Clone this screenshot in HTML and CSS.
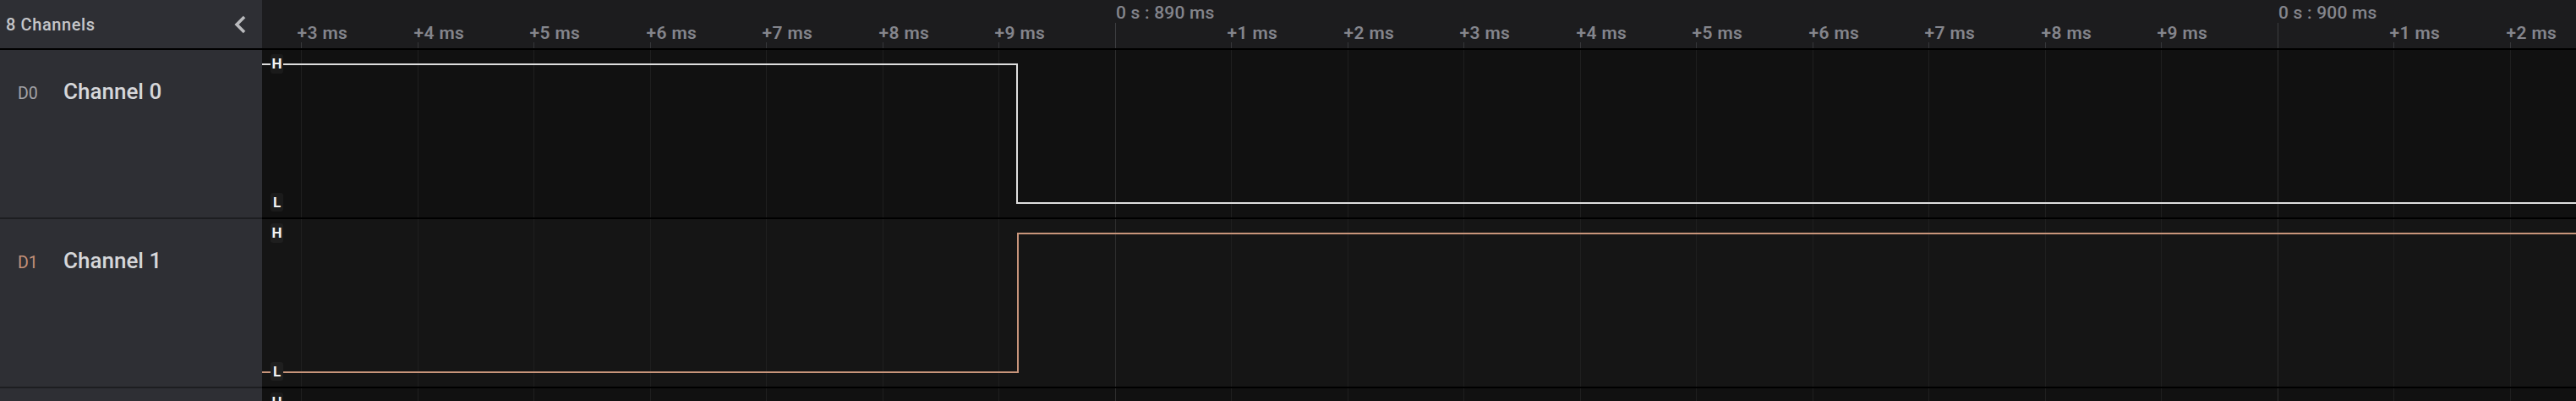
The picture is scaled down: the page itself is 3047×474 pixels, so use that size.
FILE: index.html
```html
<!DOCTYPE html>
<html lang="en">
<head>
<meta charset="utf-8">
<title>Logic Analyzer</title>
<link rel="stylesheet" href="styles.css">
</head>
<body>
<div class="app">
  <div class="side-head">
    <span class="title">8 Channels</span>
    <svg class="chev" width="16" height="24" viewBox="0 0 16 24"><polyline points="13,3 4,12 13,21" fill="none" stroke="#b9babd" stroke-width="3.6" stroke-linecap="butt" stroke-linejoin="miter"/></svg>
  </div>
  <div class="ruler">
    <svg class="ruler-ticks" width="2737" height="57">
      <g stroke="#36373a" stroke-width="1">
        <line x1="46.5" y1="50" x2="46.5" y2="57"/><line x1="184.5" y1="50" x2="184.5" y2="57"/>
        <line x1="321.5" y1="50" x2="321.5" y2="57"/><line x1="459.5" y1="50" x2="459.5" y2="57"/>
        <line x1="596.5" y1="50" x2="596.5" y2="57"/><line x1="734.5" y1="50" x2="734.5" y2="57"/>
        <line x1="871.5" y1="50" x2="871.5" y2="57"/>
        <line x1="1146.5" y1="50" x2="1146.5" y2="57"/><line x1="1284.5" y1="50" x2="1284.5" y2="57"/>
        <line x1="1421.5" y1="50" x2="1421.5" y2="57"/><line x1="1559.5" y1="50" x2="1559.5" y2="57"/>
        <line x1="1696.5" y1="50" x2="1696.5" y2="57"/><line x1="1834.5" y1="50" x2="1834.5" y2="57"/>
        <line x1="1971.5" y1="50" x2="1971.5" y2="57"/><line x1="2109.5" y1="50" x2="2109.5" y2="57"/>
        <line x1="2246.5" y1="50" x2="2246.5" y2="57"/>
        <line x1="2521.5" y1="50" x2="2521.5" y2="57"/><line x1="2659.5" y1="50" x2="2659.5" y2="57"/>
      </g>
      <g stroke="#3c3d40" stroke-width="1">
        <line x1="1009.5" y1="27" x2="1009.5" y2="57"/><line x1="2384.5" y1="27" x2="2384.5" y2="57"/>
      </g>
    </svg>
    <span class="tick-label" style="left:41.5px">+3 ms</span>
    <span class="tick-label" style="left:179.5px">+4 ms</span>
    <span class="tick-label" style="left:316.5px">+5 ms</span>
    <span class="tick-label" style="left:454.5px">+6 ms</span>
    <span class="tick-label" style="left:591.5px">+7 ms</span>
    <span class="tick-label" style="left:729.5px">+8 ms</span>
    <span class="tick-label" style="left:866.5px">+9 ms</span>
    <span class="tick-label major" style="left:1010px">0 s : 890 ms</span>
    <span class="tick-label" style="left:1141.5px">+1 ms</span>
    <span class="tick-label" style="left:1279.5px">+2 ms</span>
    <span class="tick-label" style="left:1416.5px">+3 ms</span>
    <span class="tick-label" style="left:1554.5px">+4 ms</span>
    <span class="tick-label" style="left:1691.5px">+5 ms</span>
    <span class="tick-label" style="left:1829.5px">+6 ms</span>
    <span class="tick-label" style="left:1966.5px">+7 ms</span>
    <span class="tick-label" style="left:2104.5px">+8 ms</span>
    <span class="tick-label" style="left:2241.5px">+9 ms</span>
    <span class="tick-label major" style="left:2385px">0 s : 900 ms</span>
    <span class="tick-label" style="left:2516.5px">+1 ms</span>
    <span class="tick-label" style="left:2654.5px">+2 ms</span>
  </div>

  <div class="side-row">
    <span class="ch-id">D0</span>
    <span class="ch-name">Channel 0</span>
  </div>
  <div class="track track-dark">
    <svg class="wave" width="2737" height="198">
      <g id="grid" stroke-width="1">
        <g stroke="#1f1f1f">
          <line x1="46.5" y1="0" x2="46.5" y2="198"/><line x1="184.5" y1="0" x2="184.5" y2="198"/>
          <line x1="321.5" y1="0" x2="321.5" y2="198"/><line x1="459.5" y1="0" x2="459.5" y2="198"/>
          <line x1="596.5" y1="0" x2="596.5" y2="198"/><line x1="734.5" y1="0" x2="734.5" y2="198"/>
          <line x1="871.5" y1="0" x2="871.5" y2="198"/>
          <line x1="1146.5" y1="0" x2="1146.5" y2="198"/><line x1="1284.5" y1="0" x2="1284.5" y2="198"/>
          <line x1="1421.5" y1="0" x2="1421.5" y2="198"/><line x1="1559.5" y1="0" x2="1559.5" y2="198"/>
          <line x1="1696.5" y1="0" x2="1696.5" y2="198"/><line x1="1834.5" y1="0" x2="1834.5" y2="198"/>
          <line x1="1971.5" y1="0" x2="1971.5" y2="198"/><line x1="2109.5" y1="0" x2="2109.5" y2="198"/>
          <line x1="2246.5" y1="0" x2="2246.5" y2="198"/>
          <line x1="2521.5" y1="0" x2="2521.5" y2="198"/><line x1="2659.5" y1="0" x2="2659.5" y2="198"/>
        </g>
        <g stroke="#2d2d2d">
          <line x1="1009.5" y1="0" x2="1009.5" y2="198"/><line x1="2384.5" y1="0" x2="2384.5" y2="198"/>
        </g>
      </g>
      <polyline points="0,17 893,17 893,181 2737,181" fill="none" stroke="#dedede" stroke-width="2"/>
    </svg>
    <span class="lvl lvl-h">H</span>
    <span class="lvl lvl-l">L</span>
  </div>

  <div class="side-row">
    <span class="ch-id ch-id-1">D1</span>
    <span class="ch-name">Channel 1</span>
  </div>
  <div class="track track-mid">
    <svg class="wave" width="2737" height="198">
      <use href="#grid"/>
      <polyline points="0,181 894,181 894,17 2737,17" fill="none" stroke="#c8957b" stroke-width="2"/>
    </svg>
    <span class="lvl lvl-h">H</span>
    <span class="lvl lvl-l">L</span>
  </div>

  <div class="side-row"></div>
  <div class="track track-dark">
    <svg class="wave" width="2737" height="198">
      <use href="#grid"/>
    </svg>
    <span class="lvl lvl-h">H</span>
  </div>
</div>
</body>
</html>
```

FILE: styles.css
```css
* { box-sizing: border-box; }

html, body {
  margin: 0;
  padding: 0;
  background: #111111;
  overflow: hidden;
  font-family: Roboto, "Liberation Sans", sans-serif;
}

.app {
  display: grid;
  grid-template-columns: 310px 2737px;
  grid-template-rows: 59px 200px 200px 200px;
  width: 3047px;
}

.side-head {
  display: flex;
  align-items: center;
  padding-left: 7px;
  padding-right: 18px;
  background: #2e2f34;
  border-bottom: 2px solid #000;
}

.title {
  font-size: 20px;
  font-weight: 500;
  color: #c6c7ca;
  line-height: 20px;
  letter-spacing: 0.6px;
}

.chev {
  display: block;
  margin-left: auto;
}

.ruler {
  position: relative;
  background: #1c1c1e;
  border-bottom: 2px solid #000;
}

.ruler-ticks {
  display: block;
}

.tick-label {
  position: absolute;
  top: 29px;
  font-size: 21px;
  line-height: 21px;
  font-weight: 600;
  color: #84858c;
  white-space: nowrap;
  letter-spacing: 0.4px;
}

.tick-label.major {
  top: 5px;
  font-weight: 500;
  letter-spacing: 0.2px;
}

.side-row {
  display: flex;
  align-items: baseline;
  padding-left: 21px;
  padding-top: 36px;
  background: #2e2f34;
  border-bottom: 2px solid #1d1e21;
  line-height: 26px;
}

.ch-id {
  width: 54px;
  font-size: 19.5px;
  font-weight: 400;
  color: #a3a4a8;
}

.ch-id-1 {
  color: #c4927a;
}

.ch-name {
  font-size: 26px;
  font-weight: 500;
  color: #d6d7da;
}

.track {
  position: relative;
  border-bottom: 2px solid #000;
}

.track-dark { background: #111111; }
.track-mid { background: #151515; }

.wave {
  display: block;
}

.lvl {
  position: absolute;
  left: 10px;
  width: 15px;
  height: 23px;
  display: flex;
  align-items: center;
  justify-content: center;
  background: #1b1b1b;
  border-radius: 3px;
  font-size: 17px;
  font-weight: 700;
  color: #f2f2f2;
  line-height: 1;
}

.track-mid .lvl { background: #1f1f1f; }

.lvl-h { top: 5px; }
.lvl-l { top: 169px; height: 22px; }
```
